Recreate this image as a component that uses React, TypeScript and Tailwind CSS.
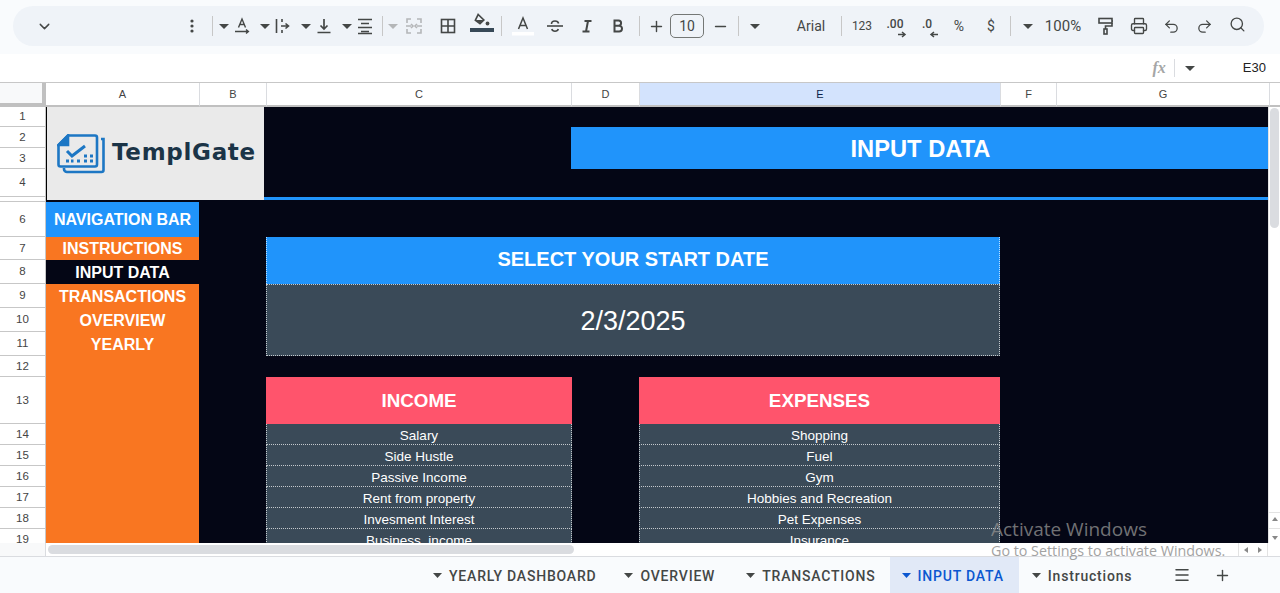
import React from 'react';
import { ChevronDown, Printer, Undo2, Redo2, Search, Plus, Minus, Menu } from 'lucide-react';

const ink = '#444746';

function Caret({ light = false }: { light?: boolean }) {
  return (
    <svg width="10" height="5" viewBox="0 0 10 5" className="shrink-0">
      <path d="M0 0h10L5 5z" fill={light ? '#b4b6b8' : ink} />
    </svg>
  );
}

function Slot({ className, children }: { className: string; children?: React.ReactNode }) {
  return <div className={`flex shrink-0 items-center justify-center ${className}`}>{children}</div>;
}

function Sep({ className = '' }: { className?: string }) {
  return (
    <div className={`flex w-[10px] shrink-0 justify-center ${className}`}>
      <div className="h-5 w-px bg-[#c7c7c7]" />
    </div>
  );
}

function Icon({ children, w = 20, h = 20 }: { children: React.ReactNode; w?: number; h?: number }) {
  return (
    <svg width={w} height={h} viewBox="0 0 20 20" fill="none" stroke={ink} strokeWidth="1.6" className="shrink-0">
      {children}
    </svg>
  );
}

function Toolbar() {
  return (
    <div className="h-[54px] shrink-0 bg-[#f9fbfd] pl-[13px] pr-4 pt-[6px]">
      <div className="flex h-10 w-[1251px] items-center rounded-[20px] bg-[#eff3f8] text-[#444746]">
        <Slot className="w-[62px]"><ChevronDown size={17} strokeWidth={2} color={ink} /></Slot>
        <Slot className="ml-[103px] w-[28px]">
          <svg width="4" height="14" viewBox="0 0 4 14"><circle cx="2" cy="2" r="1.6" fill={ink} /><circle cx="2" cy="7" r="1.6" fill={ink} /><circle cx="2" cy="12" r="1.6" fill={ink} /></svg>
        </Slot>
        <Sep className="mx-px" />
        <Slot className="w-3"><Caret /></Slot>
        <Slot className="w-6">
          <Icon>
            <path d="M6.500 11.500 10 3l3.500 8.500M7.800 8.500h4.400" strokeWidth="1.400" />
            <path d="M3 15.500h13M14 13.500l2.400 2-2.400 2" strokeWidth="1.400" />
          </Icon>
        </Slot>
        <Slot className="ml-[5px] w-3"><Caret /></Slot>
        <Slot className="w-6">
          <Icon>
            <path d="M3.500 3v14M9 3v3M9 14v3M8 10h7M12.500 7.500 15.500 10l-3 2.500" />
          </Icon>
        </Slot>
        <Slot className="ml-[5px] w-3"><Caret /></Slot>
        <Slot className="w-6">
          <Icon>
            <path d="M10 3v10M6.500 9.500 10 13l3.500-3.500M3.500 16.500h13" strokeWidth="1.700" />
          </Icon>
        </Slot>
        <Slot className="ml-[5px] w-3"><Caret /></Slot>
        <Slot className="w-6">
          <Icon>
            <path d="M3 3.500h14M6 7.500h8M3 11.500h14M6 15.500h8M3 17.500h14" strokeWidth="1.300" />
          </Icon>
        </Slot>
        <Sep />
        <Slot className="w-3"><Caret light /></Slot>
        <Slot className="ml-[3px] w-6">
          <svg width="18" height="18" viewBox="0 0 18 18" fill="none" stroke="#b4b6b8" strokeWidth="1.600">
            <path d="M2 6V2h4M12 2h4v4M2 12v4h4M12 16h4v-4M1 9h5M6 7l2 2-2 2M17 9h-5M12 7l-2 2 2 2" />
          </svg>
        </Slot>
        <Slot className="ml-[10px] w-6">
          <Icon><rect x="3.500" y="3.500" width="13" height="13" /><path d="M10 3.500v13M3.500 10h13" /></Icon>
        </Slot>
        <Slot className="ml-[10px] w-6 flex-col">
          <svg width="24" height="24" viewBox="0 0 24 24" className="-mt-1">
            <path d="M8.200 2.500 13.800 8 10 11.600 5.400 8.200Z" fill="none" stroke={ink} strokeWidth="1.700" />
            <path d="M6 8h7.500L10 11.300Z" fill={ink} />
            <circle cx="17.500" cy="11.500" r="1.900" fill={ink} />
            <rect x="0" y="16" width="24" height="4" fill="#374957" />
          </svg>
        </Slot>
        <Sep className="ml-[2px]" />
        <Slot className="ml-[5px] w-6">
          <svg width="24" height="24" viewBox="0 0 24 24" fill="none" stroke={ink} strokeWidth="1.500">
            <path d="M7.500 15 12 4l4.500 11M9 11.500h6" />
            <rect x="1" y="18" width="22" height="3.500" fill="#fff" stroke="none" />
          </svg>
        </Slot>
        <Slot className="ml-2 w-6">
          <Icon>
            <path d="M2 10h16" />
            <path d="M6.500 8c0-2 1.500-3 3.500-3s3.300 1 3.600 2.500M6.800 13c.4 1.500 1.500 2.200 3.200 2.200s2.900-.8 3.300-2.200" strokeWidth="1.600" />
          </Icon>
        </Slot>
        <Slot className="ml-2 w-6">
          <Icon>
            <path d="M7.500 5h7M5.500 15.500h7M11 5 9 15.500" strokeWidth="2" />
          </Icon>
        </Slot>
        <Slot className="ml-[7px] w-6">
          <Icon>
            <path d="M6.500 4.500h4a2.600 2.600 0 0 1 0 5.200h-4zM6.500 9.700h4.600a2.900 2.900 0 0 1 0 5.800H6.500z" strokeWidth="2" />
          </Icon>
        </Slot>
        <Sep className="ml-[4px]" />
        <Slot className="w-6"><Plus size={17} strokeWidth={2} color={ink} /></Slot>
        <Slot className="ml-[2px] h-6 w-[34px] rounded-[5px] border border-[#747775] font-['Roboto',sans-serif] text-sm">10</Slot>
        <Slot className="ml-1 w-6"><Minus size={17} strokeWidth={2} color={ink} /></Slot>
        <Sep className="ml-px" />
        <Slot className="ml-[6px] w-3"><Caret /></Slot>
        <Slot className="ml-[25px] w-[50px] font-['Roboto',sans-serif] text-sm">Arial</Slot>
        <Sep />
        <Slot className="ml-1 w-6 font-['Roboto',sans-serif] text-xs">123</Slot>
        <Slot className="ml-[9px] w-6">
          <div className="relative h-5 w-6 text-center font-['Roboto',sans-serif] text-xs font-medium leading-[16px]">
            .00
            <svg width="10" height="7" viewBox="0 0 10 7" className="absolute bottom-[-2px] right-0"><path d="M1 3.500h7M5 1l3 2.500L5 6" fill="none" stroke={ink} strokeWidth="1.500" /></svg>
          </div>
        </Slot>
        <Slot className="ml-2 w-6">
          <div className="relative h-5 w-6 text-center font-['Roboto',sans-serif] text-xs font-medium leading-[16px]">
            .0
            <svg width="10" height="7" viewBox="0 0 10 7" className="absolute bottom-[-2px] right-0"><path d="M9 3.500H2M5 1 2 3.500 5 6" fill="none" stroke={ink} strokeWidth="1.500" /></svg>
          </div>
        </Slot>
        <Slot className="ml-2 w-6 font-['Roboto',sans-serif] text-sm">%</Slot>
        <Slot className="ml-2 w-6 font-['Roboto',sans-serif] text-sm">$</Slot>
        <Sep className="ml-[2px]" />
        <Slot className="ml-[7px] w-3"><Caret /></Slot>
        <Slot className="ml-[6px] w-[46px] font-['Roboto',sans-serif] text-[15px]">100%</Slot>
        <Slot className="ml-2 w-6">
          <Icon>
            <rect x="3" y="2.500" width="13" height="4.500" />
            <path d="M16 5h1M16 7v3H9.500v3" />
            <rect x="8" y="13" width="3" height="5" />
          </Icon>
        </Slot>
        <Slot className="ml-[9px] w-6"><Printer size={18} strokeWidth={1.8} color={ink} /></Slot>
        <Slot className="ml-2 w-6"><Undo2 size={17} strokeWidth={1.8} color={ink} /></Slot>
        <Slot className="ml-[9px] w-6"><Redo2 size={17} strokeWidth={1.8} color={ink} /></Slot>
        <Slot className="-mt-[3px] ml-[9px] w-6"><Search size={17} strokeWidth={1.9} color={ink} /></Slot>
      </div>
    </div>
  );
}

function FormulaBar() {
  return (
    <div className="flex h-[28px] shrink-0 items-center justify-end bg-white pr-[14px]">
      <span className="font-['Liberation_Serif',serif] text-base font-bold italic text-[#a5a6a6]">fx</span>
      <div className="ml-2 h-[18px] w-px bg-[#dadce0]" />
      <div className="ml-[10px]"><Caret /></div>
      <span className="ml-[48px] font-['Liberation_Sans',sans-serif] text-[13px] text-[#222]">E30</span>
    </div>
  );
}

const cols = [
  ['A', 'w-[154px]'],
  ['B', 'w-[67px]'],
  ['C', 'w-[305px]'],
  ['D', 'w-[68px]'],
  ['E', 'w-[361px]'],
  ['F', 'w-[56px]'],
  ['G', 'w-[213px]'],
];

function ColumnHeader() {
  return (
    <div className="flex h-[25px] shrink-0 border-t border-[#c7c7c7] bg-white font-['Liberation_Sans',sans-serif] text-[11px] text-[#444]">
      <div className="h-full w-[46px] shrink-0 border-b-4 border-r-4 border-[#c0c0c0] bg-[#f8f9fa]" />
      {cols.map(([name, w]) => (
        <div
          key={name}
          className={`flex shrink-0 items-center justify-center border-b-2 border-r border-b-[#c0c0c0] border-r-[#dadce0] ${w} ${
            name === 'E' ? 'bg-[#d3e3fd] text-[#0b1f4a]' : ''
          }`}
        >
          {name}
        </div>
      ))}
      <div className="flex-1 border-b-2 border-[#c0c0c0]" />
    </div>
  );
}

const rows: [string, string][] = [
  ['1', 'h-[20px]'],
  ['2', 'h-[21px]'],
  ['3', 'h-[21px]'],
  ['4', 'h-[28px]'],
  ['', 'h-[5px]'],
  ['6', 'h-[35px]'],
  ['7', 'h-[23px]'],
  ['8', 'h-[24px]'],
  ['9', 'h-[24px]'],
  ['10', 'h-[24px]'],
  ['11', 'h-[24px]'],
  ['12', 'h-[21px]'],
  ['13', 'h-[47px]'],
  ['14', 'h-[21px]'],
  ['15', 'h-[21px]'],
  ['16', 'h-[21px]'],
  ['17', 'h-[21px]'],
  ['18', 'h-[21px]'],
  ['19', 'h-[21px]'],
];

function RowHeaders() {
  return (
    <div className="w-[46px] shrink-0 border-r border-[#c7c7c7] bg-white font-['Liberation_Sans',sans-serif] text-[11.500px] text-[#444]">
      {rows.map(([n, h], i) => (
        <div key={i} className={`flex items-center justify-center border-b border-[#c7c7c7] pt-px ${h}`}>
          {n}
        </div>
      ))}
    </div>
  );
}

function Logo() {
  return (
    <div className="col-start-1 col-end-3 row-start-1 row-end-6 flex h-[93px] w-[218px] items-center self-start border-l border-black bg-[#eaeaea] pl-[10px]">
      <svg width="48" height="40" viewBox="0 0 48 40" fill="none" stroke="#1d77c4" strokeWidth="2.600" className="shrink-0">
        <path d="M44 5h2.500v31a2 2 0 0 1-2 2H10a3 3 0 0 1-3-3v-1" />
        <path d="M11 1.500h27a2 2 0 0 1 2 2v27a2 2 0 0 1-2 2H3.500a2 2 0 0 1-2-2V11z" />
        <path d="M1.500 11h9.500V1.500z" fill="#1d77c4" />
        <path d="M10 17l5 5 13-10" strokeWidth="3" />
        <path d="M9 27h3M14 27h2.500M20 27h3M27 27h3M27 22h3M33 22h3M33 27h3" strokeWidth="2.800" />
      </svg>
      <span className="mb-[2px] ml-[7px] font-['DejaVu_Sans',sans-serif] text-[23px] font-bold tracking-[0.7px] text-[#1b3447]">TemplGate</span>
    </div>
  );
}

const income = ['Salary', 'Side Hustle', 'Passive Income', 'Rent from property', 'Invesment Interest', 'Business, income'];
const expenses = ['Shopping', 'Fuel', 'Gym', 'Hobbies and Recreation', 'Pet Expenses', 'Insurance'];

function SheetGrid() {
  return (
    <div className="grid h-full grid-cols-[153px_67px_306px_67px_361px_56px_212px] grid-rows-[20px_21px_21px_28px_5px_35px_23px_24px_24px_24px_24px_21px_47px_21px_21px_21px_21px_21px_21px] overflow-hidden bg-[#040615] font-['Liberation_Sans',sans-serif] text-white">
      <div className="col-start-1 col-end-8 row-start-5 h-[3px] bg-[#2094fb]" />
      <Logo />
      <div className="col-start-4 col-end-8 row-start-2 row-end-4 -ml-px flex items-center justify-center bg-[#2094fb] pl-[2px] pt-[4px] text-[23.700px] font-bold">
        INPUT DATA
      </div>

      <div className="col-start-1 row-start-6 flex items-center justify-center bg-[#2094fb] text-base font-bold">NAVIGATION BAR</div>
      <div className="col-start-1 row-start-7 flex items-center justify-center bg-[#f97621] text-base font-bold">INSTRUCTIONS</div>
      <div className="col-start-1 row-start-8 flex items-center justify-center pt-px text-base font-bold">INPUT DATA</div>
      <div className="col-start-1 row-start-9 row-end-[20] flex flex-col items-center bg-[#f97621] pt-px text-base font-bold">
        <div className="flex h-6 items-center">TRANSACTIONS</div>
        <div className="flex h-6 items-center">OVERVIEW</div>
        <div className="flex h-6 items-center">YEARLY</div>
      </div>

      <div className="col-start-3 col-end-6 row-start-7 row-end-9 flex items-center justify-center border-l border-r border-dotted border-white/70 bg-[#2094fb] pb-[3px] text-xl font-bold">
        SELECT YOUR START DATE
      </div>
      <div className="col-start-3 col-end-6 row-start-9 row-end-12 flex items-center justify-center border border-dotted border-white/70 bg-[#3a4a58] pt-[2px] text-[27px]">
        2/3/2025
      </div>

      <div className="col-start-3 row-start-13 flex items-center justify-center bg-[#ff546c] pt-[2px] text-[18.800px] font-bold">INCOME</div>
      <div className="col-start-5 row-start-13 flex items-center justify-center bg-[#ff546c] pt-[2px] text-[18.800px] font-bold">EXPENSES</div>
      {[income, expenses].map((list, c) =>
        list.map((label, i) => (
          <div
            key={label}
            style={{ gridColumnStart: c === 0 ? 3 : 5, gridRowStart: 14 + i }}
            className="flex items-center justify-center border border-t-0 border-dotted border-white/70 bg-[#3a4a58] pt-[5px] text-[13.500px] first:border-t"
          >
            {label}
          </div>
        )),
      )}
    </div>
  );
}

function VScroll() {
  return (
    <div className="flex w-3 shrink-0 flex-col border-l border-[#e3e3e3] bg-white">
      <div className="ml-[1px] mt-px h-[120px] w-[9px] rounded-[5px] bg-[#dadce0]" />
      <div className="mt-auto flex h-[31px] flex-col items-center justify-around border-t border-[#e3e3e3]">
        <svg width="6" height="4" viewBox="0 0 6 4"><path d="M3 0l3 4H0z" fill="#888" /></svg>
        <div className="h-px w-full bg-[#e3e3e3]" />
        <svg width="6" height="4" viewBox="0 0 6 4"><path d="M3 4 0 0h6z" fill="#888" /></svg>
      </div>
    </div>
  );
}

function HScroll() {
  return (
    <div className="flex h-[13px] shrink-0 bg-white">
      <div className="h-full w-[46px] border-r border-[#dadce0] bg-[#f8f9fa]" />
      <div className="ml-[2px] mt-[2px] h-[9px] w-[526px] rounded-[5px] bg-[#dadce0]" />
      <div className="ml-auto mr-[12px] flex h-full w-[30px] items-center justify-around border-x border-[#e3e3e3]">
        <svg width="4" height="6" viewBox="0 0 4 6"><path d="M0 3l4-3v6z" fill="#888" /></svg>
        <svg width="4" height="6" viewBox="0 0 4 6"><path d="M4 3 0 0v6z" fill="#888" /></svg>
      </div>
    </div>
  );
}

function Tab({ label, active = false, className = '' }: { label: string; active?: boolean; className?: string }) {
  return (
    <div className={`flex h-full shrink-0 items-center pt-px ${className}`}>
      <svg width="9" height="5" viewBox="0 0 9 5" className="shrink-0">
        <path d="M0 0h9L4.500 5z" fill={active ? '#0b57d0' : ink} />
      </svg>
      <span className={`ml-[7px] whitespace-nowrap text-sm font-medium tracking-[0.8px] ${active ? 'text-[#0b57d0]' : 'text-[#444746]'}`}>{label}</span>
    </div>
  );
}

function TabBar() {
  return (
    <div className="flex h-[37px] shrink-0 items-center border-t border-[#dadce0] bg-[#f9fbfd] pl-[433px] font-['Roboto',sans-serif]">
      <Tab label="YEARLY DASHBOARD" />
      <Tab label="OVERVIEW" className="ml-[28px]" />
      <Tab label="TRANSACTIONS" className="ml-[31px]" />
      <Tab label="INPUT DATA" active className="ml-[14px] bg-[#e1e9f7] pl-[12px] pr-[15px]" />
      <Tab label="Instructions" className="ml-[13px]" />
      <div className="ml-[41px]"><Menu size={18} strokeWidth={2} color={ink} /></div>
      <div className="ml-[23px]"><Plus size={17} strokeWidth={2} color={ink} /></div>
    </div>
  );
}

export default function App() {
  return (
    <div className="relative flex h-[593px] w-[1280px] flex-col overflow-hidden bg-white">
      <Toolbar />
      <FormulaBar />
      <ColumnHeader />
      <div className="flex h-[436px] shrink-0 overflow-hidden">
        <RowHeaders />
        <div className="w-[1222px] shrink-0 overflow-hidden">
          <SheetGrid />
        </div>
        <VScroll />
      </div>
      <HScroll />
      <TabBar />
      <div className="pointer-events-none absolute left-[991px] top-[517px] font-['Open_Sans',sans-serif] text-[#8c8c8c] opacity-80">
        <div className="text-[19px] leading-[24px]">Activate Windows</div>
        <div className="text-[14.300px] leading-[20px]">Go to Settings to activate Windows.</div>
      </div>
    </div>
  );
}
